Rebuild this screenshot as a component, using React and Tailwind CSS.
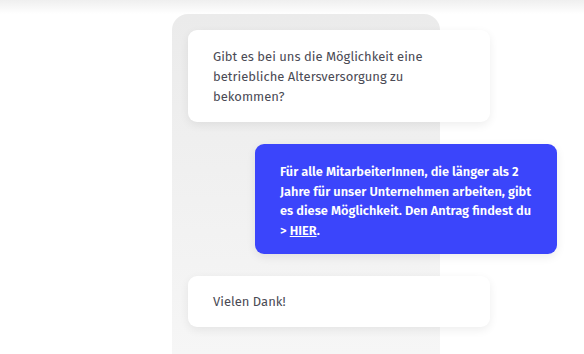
import React from 'react';

export default function App() {
  return (
    <div
      className="relative h-[354px] w-[584px] overflow-hidden bg-white"
      style={{ fontFamily: '"Fira Sans", Lato, "Noto Sans", sans-serif' }}
    >
      {/* top fade */}
      <div className="absolute left-0 top-0 h-[14px] w-full bg-gradient-to-b from-[#efefef] to-white" />

      <div className="relative ml-[172px] mt-[14px] h-[340px] w-[268px] rounded-t-[16px] bg-gradient-to-b from-[#ebebeb] to-[#f6f6f6]">
        <div className="flex flex-col gap-[22px] pl-[16px] pt-[16px]">
          <div className="w-[302px] rounded-[9px] bg-white px-[25px] pb-[15px] pt-[17px] text-[13px] leading-[20px] text-[#4b4b55] shadow-[0_3px_10px_rgba(0,0,0,0.07)]">
            Gibt es bei uns die Möglichkeit eine betriebliche Altersversorgung zu bekommen?
          </div>

          <div className="ml-[67px] w-[302px] rounded-[9px] bg-[#3b45fb] px-[25px] pb-[13px] pt-[18px] text-[12.8px] font-semibold leading-[19.7px] text-white shadow-[0_3px_10px_rgba(0,0,0,0.08)]">
            Für alle MitarbeiterInnen, die länger als 2 Jahre für unser Unternehmen arbeiten, gibt es diese Möglichkeit. Den Antrag findest du &gt; <span className="underline">HIER</span>.
          </div>

          <div className="w-[302px] rounded-[9px] bg-white px-[25px] pb-[15px] pt-[16px] text-[13px] leading-[20px] text-[#4b4b55] shadow-[0_3px_10px_rgba(0,0,0,0.07)]">
            Vielen Dank!
          </div>
        </div>
      </div>
    </div>
  );
}
